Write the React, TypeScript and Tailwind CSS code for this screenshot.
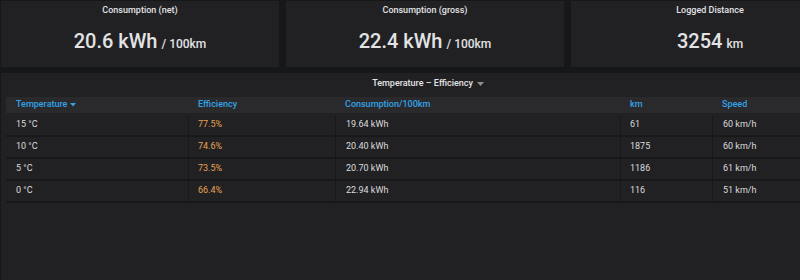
import React from "react";

const rows = [
  { t: "15 °C", e: "77.5%", c: "19.64 kWh", km: "61", s: "60 km/h" },
  { t: "10 °C", e: "74.6%", c: "20.40 kWh", km: "1875", s: "60 km/h" },
  { t: "5 °C", e: "73.5%", c: "20.70 kWh", km: "1186", s: "61 km/h" },
  { t: "0 °C", e: "66.4%", c: "22.94 kWh", km: "116", s: "51 km/h" },
];

function Stat({ title, value, unit, w }: { title: string; value: string; unit: string; w: string }) {
  return (
    <div className={`${w} h-[66px] shrink-0 bg-[#212124] flex flex-col items-center`}>
      <div className="h-[20px] pt-[4px] text-[9px] font-medium text-[#e3e3e4] leading-[11px]">{title}</div>
      <div className="mt-[7px] flex items-baseline text-[#e3e3e4]">
        <span className="text-[20px] font-medium leading-[26px]">{value}</span>
        <span className="text-[12px] font-medium ml-[4px]">{unit}</span>
      </div>
    </div>
  );
}

export default function App() {
  return (
    <div
      className="w-[800px] h-[280px] overflow-hidden bg-[#161719] pt-[1px] pl-[1px]"
      style={{ fontFamily: "Roboto, 'Liberation Sans', sans-serif" }}
    >
      <div className="flex gap-[7px] w-[900px]">
        <Stat title="Consumption (net)" value="20.6 kWh" unit="/ 100km" w="w-[278px]" />
        <Stat title="Consumption (gross)" value="22.4 kWh" unit="/ 100km" w="w-[278px]" />
        <Stat title="Logged Distance" value="3254" unit="km" w="w-[278px]" />
      </div>
      <div className="mt-[6px] w-[900px] h-[220px] bg-[#212124] text-[9px]">
        <div className="w-[854px] h-[24px] pb-[3px] flex items-center justify-center text-[#e3e3e4] font-medium">
          Temperature – Efficiency
          <svg width="7" height="4" viewBox="0 0 7 4" className="ml-[4px] mt-[1px]">
            <path d="M0 0 L7 0 L3.5 4 Z" fill="#8e8e8e" />
          </svg>
        </div>
        <div className="pl-[5px]">
          <div className="flex h-[16px] bg-[#2a2a2d] items-center text-[#33a2e5] font-medium">
            <div className="w-[183px] pl-[10px] flex items-center">
              Temperature
              <svg width="6" height="4" viewBox="0 0 6 4" className="ml-[3px]">
                <path d="M0 0 L6 0 L3 3.5 Z" fill="#33a2e5" />
              </svg>
            </div>
            <div className="w-[147px] pl-[9px]">Efficiency</div>
            <div className="w-[285px] pl-[9px]">Consumption/100km</div>
            <div className="w-[92px] pl-[9px]">km</div>
            <div className="flex-1 pl-[9px]">Speed</div>
          </div>
          <div className="h-[2px]" />
          {rows.map((r) => (
            <div key={r.t} className="flex h-[22px] items-center border-b-2 border-[#18181a] text-[#dcdcdd]">
              <div className="w-[183px] h-full pl-[10px] flex items-center border-r border-[#18181a]">{r.t}</div>
              <div className="w-[147px] h-full pl-[9px] flex items-center border-r border-[#18181a] text-[#e8a252]">{r.e}</div>
              <div className="w-[285px] h-full pl-[10px] flex items-center border-r border-[#18181a]">{r.c}</div>
              <div className="w-[92px] h-full pl-[9px] flex items-center border-r border-[#18181a]">{r.km}</div>
              <div className="flex-1 h-full pl-[10px] flex items-center">{r.s}</div>
            </div>
          ))}
        </div>
      </div>
    </div>
  );
}
